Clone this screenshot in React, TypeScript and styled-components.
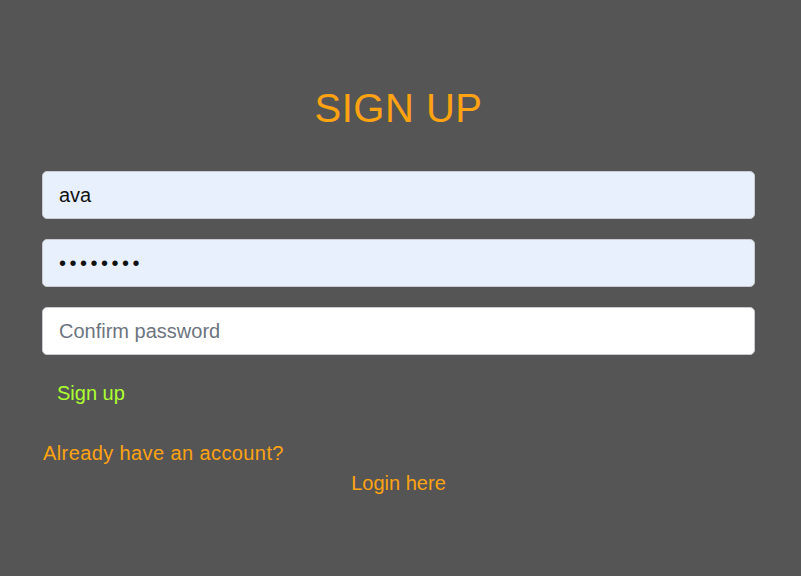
import React from "react";
import styled, { createGlobalStyle } from "styled-components";

const Global = createGlobalStyle`
  html, body { margin: 0; padding: 0; background: #555555; }
  body { font-family: "Liberation Sans", Arial, sans-serif; }
`;

const Page = styled.div`
  min-height: 576px;
  box-sizing: border-box;
  padding: 84px 46px 0 42px;
  display: flex;
  flex-direction: column;
`;

const Title = styled.h1`
  margin: 0 0 39px;
  text-align: center;
  font-weight: 400;
  font-size: 40px;
  line-height: 48px;
  color: #ffa312;
  letter-spacing: 0.5px;
`;

const Form = styled.form`
  display: flex;
  flex-direction: column;
  gap: 20px;
`;

const Input = styled.input<{ $filled?: boolean; $secret?: boolean }>`
  box-sizing: border-box;
  height: 48px;
  width: 100%;
  padding: 0 16px;
  border: 1px solid #c8ccd2;
  border-radius: 5px;
  background: ${(p) => (p.$filled ? "#e8f0fe" : "#ffffff")};
  font-family: inherit;
  font-size: 20px;
  letter-spacing: ${(p) => (p.$secret ? "3.5px" : "normal")};
  color: #111;
  outline: none;
  &::placeholder { color: #6c7480; letter-spacing: normal; }
`;

const SubmitButton = styled.button`
  align-self: flex-start;
  margin-top: -4px;
  padding: 10px 15px;
  background: transparent;
  border: none;
  font-family: inherit;
  font-size: 20px;
  line-height: 24px;
  color: #adff2f;
  cursor: pointer;
`;

const Footer = styled.div`
  margin-top: 23px;
  display: flex;
  flex-direction: column;
  font-size: 20px;
  line-height: 30px;
  color: #ffa312;
`;

const Prompt = styled.div`
  padding-left: 1px;
  letter-spacing: 0.4px;
`;

const LoginLink = styled.a`
  align-self: center;
  color: #ffa312;
  text-decoration: none;
  cursor: pointer;
`;

export default function App() {
  return (
    <>
      <Global />
      <Page>
        <Title>SIGN UP</Title>
        <Form onSubmit={(e) => e.preventDefault()}>
          <Input $filled type="text" defaultValue="ava" />
          <Input $filled $secret type="password" defaultValue="password" />
          <Input $secret type="password" placeholder="Confirm password" />
          <SubmitButton type="submit">Sign up</SubmitButton>
        </Form>
        <Footer>
          <Prompt>Already have an account?</Prompt>
          <LoginLink>Login here</LoginLink>
        </Footer>
      </Page>
    </>
  );
}
